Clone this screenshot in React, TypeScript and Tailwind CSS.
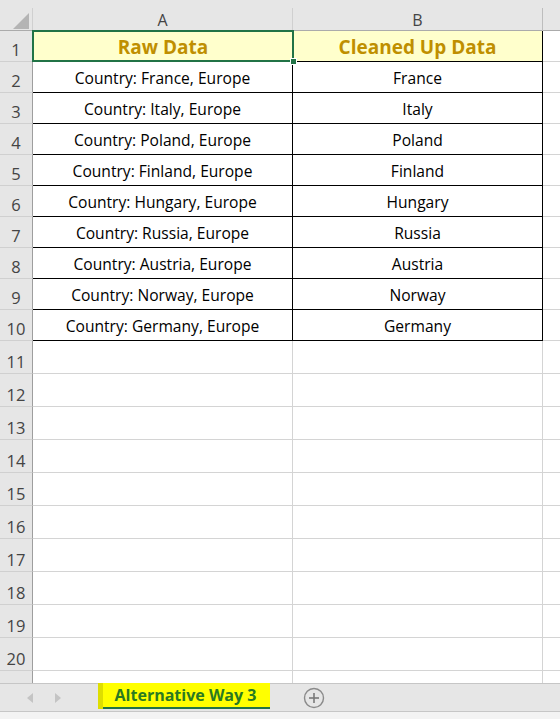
import React from "react";

const data = [
  ["Country: France, Europe", "France"],
  ["Country: Italy, Europe", "Italy"],
  ["Country: Poland, Europe", "Poland"],
  ["Country: Finland, Europe", "Finland"],
  ["Country: Hungary, Europe", "Hungary"],
  ["Country: Russia, Europe", "Russia"],
  ["Country: Austria, Europe", "Austria"],
  ["Country: Norway, Europe", "Norway"],
  ["Country: Germany, Europe", "Germany"],
];

const font = { fontFamily: '"Open Sans", "Noto Sans", sans-serif' };

function RowHead({ n, h }: { n: number | string; h: string }) {
  return (
    <div
      className={`${h} flex items-end justify-center pb-[3px] bg-[#e6e6e6] border-r border-r-[#9e9e9e] border-b border-b-[#d0d0d0] text-[16.5px] text-[#444] leading-none`}
    >
      <span>{n}</span>
    </div>
  );
}

export default function App() {
  const empty = [11, 12, 13, 14, 15, 16, 17, 18, 19, 20];
  return (
    <div className="w-[560px] h-[719px] overflow-hidden bg-white flex flex-col" style={font}>
      {/* top strip */}
      <div className="h-[8px] bg-[#e6e6e6] shrink-0" />
      {/* column headers */}
      <div className="grid grid-cols-[33px_260px_250px_1fr] h-[23px] shrink-0 bg-[#e6e6e6] border-b border-b-[#ababab]">
        <div className="relative border-r border-r-[#d0d0d0]">
          <svg className="absolute right-[3px] bottom-[3px]" width="16" height="16" viewBox="0 0 16 16">
            <polygon points="16,0 16,16 0,16" fill="#b4b4b4" />
          </svg>
        </div>
        <div className="flex items-center justify-center text-[16px] text-[#444] border-r border-r-[#d0d0d0]">A</div>
        <div className="flex items-center justify-center text-[16px] text-[#444] border-r border-r-[#bdbdbd]">B</div>
        <div />
      </div>
      {/* grid body */}
      <div className="grid grid-cols-[33px_260px_250px_1fr] shrink-0">
        {/* row 1 */}
        <RowHead n={1} h="h-[31px]" />
        <div className="relative h-[31px] pt-[2px] bg-[#ffffcc] border-b border-b-black flex items-center justify-center text-[19px] font-bold text-[#bf8f00]">
          Raw Data
          <div className="absolute left-[-1px] top-[-1px] right-[-1px] bottom-[-1px] border-2 border-[#217346] pointer-events-none" />
          <div className="absolute right-[-4px] bottom-[-4px] w-[7px] h-[7px] bg-[#217346] border border-white z-10" />
        </div>
        <div className="h-[31px] pt-[2px] bg-[#ffffcc] border-b border-b-black border-r border-r-black flex items-center justify-center text-[19px] font-bold text-[#bf8f00]">
          Cleaned Up Data
        </div>
        <div className="h-[31px] border-b border-b-[#d4d4d4]" />
        {data.map(([a, b], i) => (
          <React.Fragment key={i}>
            <RowHead n={i + 2} h="h-[31px]" />
            <div className="h-[31px] pt-[3px] border-b border-b-black border-r border-r-black flex items-center justify-center text-[15.6px] text-black">
              {a}
            </div>
            <div className="h-[31px] pt-[3px] border-b border-b-black border-r border-r-black flex items-center justify-center text-[15.6px] text-black">
              {b}
            </div>
            <div className="h-[31px] border-b border-b-[#d4d4d4]" />
          </React.Fragment>
        ))}
        {empty.map((n) => (
          <React.Fragment key={n}>
            <RowHead n={n} h="h-[33px]" />
            <div className="h-[33px] border-b border-b-[#d4d4d4] border-r border-r-[#d4d4d4]" />
            <div className="h-[33px] border-b border-b-[#d4d4d4] border-r border-r-[#d4d4d4]" />
            <div className="h-[33px] border-b border-b-[#d4d4d4]" />
          </React.Fragment>
        ))}
        <div className="h-[12px] bg-[#e6e6e6] border-r border-r-[#9e9e9e]" />
        <div className="h-[12px] border-r border-r-[#d4d4d4]" />
        <div className="h-[12px] border-r border-r-[#d4d4d4]" />
        <div className="h-[12px]" />
      </div>
      {/* sheet tab bar */}
      <div className="h-[29px] shrink-0 bg-[#e6e6e6] border-t border-t-[#c6c6c6] border-b border-b-[#c6c6c6] flex items-start">
        <div className="w-[98px] h-full flex items-center">
          <svg className="ml-[27px]" width="6" height="10" viewBox="0 0 6 10">
            <polygon points="6,0 6,10 0,5" fill="#c4c4c4" />
          </svg>
          <svg className="ml-[22px]" width="6" height="10" viewBox="0 0 6 10">
            <polygon points="0,0 0,10 6,5" fill="#c4c4c4" />
          </svg>
        </div>
        <div className="flex h-[26px] mt-[-1px]">
          <div className="w-[5px] bg-[#dede00]" />
          <div className="w-[167px] bg-[#ffff00] border-b-2 border-b-[#217346] flex items-center justify-center text-[16px] font-bold text-[#2a7a22] pr-[2px]">
            Alternative Way 3
          </div>
        </div>
        <div className="h-full flex items-center ml-[33px]">
          <svg width="22" height="22" viewBox="0 0 22 22">
            <circle cx="11" cy="11" r="9.5" fill="none" stroke="#8a8a8a" strokeWidth="1.4" />
            <line x1="11" y1="6" x2="11" y2="16" stroke="#7a7a7a" strokeWidth="1.6" />
            <line x1="6" y1="11" x2="16" y2="11" stroke="#7a7a7a" strokeWidth="1.6" />
          </svg>
        </div>
      </div>
      <div className="flex-1 bg-[#f3f3f3]" />
    </div>
  );
}
